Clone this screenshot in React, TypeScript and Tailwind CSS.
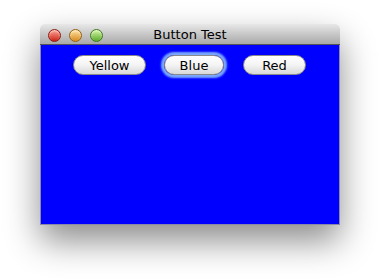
function Light({ from, to, border }: { from: string; to: string; border: string }) {
  return (
    <div
      className={`h-[13px] w-[13px] rounded-full border ${border} bg-gradient-to-b ${from} ${to} shadow-[inset_0_1px_2px_rgba(255,255,255,0.6)]`}
    />
  );
}

function Btn({ label, cls, focused }: { label: string; cls: string; focused?: boolean }) {
  return (
    <button
      className={`h-[20px] shrink-0 rounded-full border border-[#8a8a8a] bg-gradient-to-b from-white via-[#f4f4f4] to-[#d8d8d8] text-[13px] leading-none text-black ${cls} ${
        focused ? "shadow-[0_0_2px_3px_#7aa8ff]" : ""
      }`}
    >
      {label}
    </button>
  );
}

export default function App() {
  return (
    <div
      className="h-[280px] w-[380px] bg-white pt-[24px] pl-[40px]"
      style={{ fontFamily: '"Lucida Grande", "DejaVu Sans", sans-serif' }}
    >
      <div className="flex h-[201px] w-[300px] flex-col rounded-t-[5px] shadow-[0_16px_34px_rgba(0,0,0,0.45)]">
        <div className="relative flex h-[21px] items-center rounded-t-[5px] border-b border-[#555] bg-gradient-to-b from-[#e8e8e8] to-[#a9a9a9] pl-[8px] pt-[2px]">
          <div className="flex gap-[8px]">
            <Light from="from-[#ff9c8f]" to="to-[#c8140c]" border="border-[#8c1a12]" />
            <Light from="from-[#ffe39a]" to="to-[#d68a0c]" border="border-[#946010]" />
            <Light from="from-[#d2f5a0]" to="to-[#5aab25]" border="border-[#3d7a18]" />
          </div>
          <div className="absolute inset-0 flex items-center justify-center pt-[2px] text-[13px] text-black">
            Button Test
          </div>
        </div>
        <div className="flex flex-1 items-start border-x border-b border-[#8a8aa8] bg-[#0000ff] pl-[32px] pt-[10px]">
          <Btn label="Yellow" cls="w-[73px]" />
          <Btn label="Blue" cls="ml-[18px] w-[60px]" focused />
          <Btn label="Red" cls="ml-[19px] w-[63px]" />
        </div>
      </div>
    </div>
  );
}
